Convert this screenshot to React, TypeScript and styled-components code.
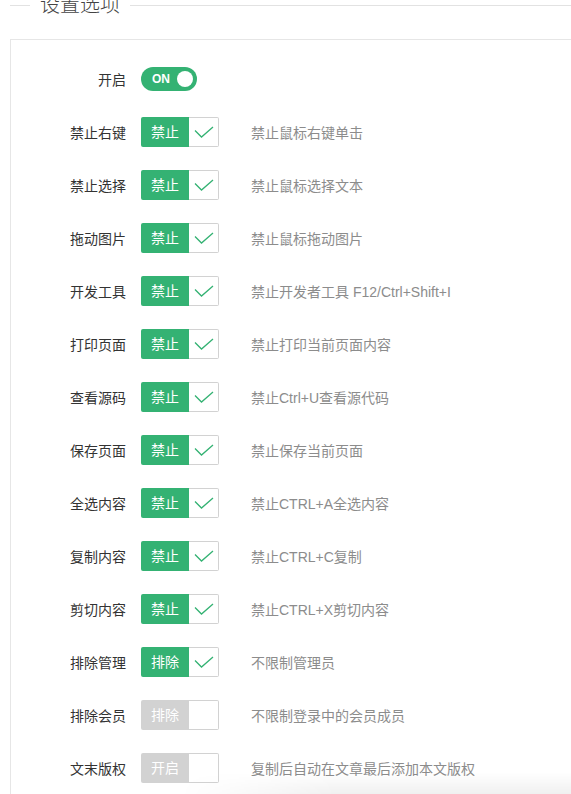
import React from "react";
import styled, { createGlobalStyle } from "styled-components";

const Global = createGlobalStyle`
  html, body { margin: 0; padding: 0; background: #fff; overflow: hidden; }
  body { font-family: "Liberation Sans", "Noto Sans CJK SC", sans-serif; color: #333; }
`;

const Page = styled.div`
  width: 600px;
  padding-left: 10px;
`;

const Legend = styled.div`
  display: flex;
  align-items: center;
  height: 20px;
  margin-top: -5px;
`;

const LegendLine = styled.div<{ $grow?: boolean }>`
  height: 1px;
  background: #e2e2e2;
  width: 20px;
  flex: ${(p) => (p.$grow ? "1" : "none")};
`;

const LegendText = styled.div`
  font-size: 20px;
  line-height: 20px;
  font-weight: 300;
  color: #444;
  padding: 0 10px;
`;

const Panel = styled.div`
  margin-top: 24px;
  border: 1px solid #e6e6e6;
  border-right: none;
  padding-top: 24px;
  padding-bottom: 40px;
  display: flex;
  flex-direction: column;
  gap: 23px;
`;

const Row = styled.div`
  display: flex;
  align-items: center;
  height: 30px;
`;

const Label = styled.div`
  width: 130px;
  box-sizing: border-box;
  padding-right: 15px;
  text-align: right;
  font-size: 14px;
  color: #333;
`;

const Switch = styled.div`
  width: 56px;
  height: 24px;
  border-radius: 12px;
  background: #34b273;
  display: flex;
  align-items: center;
  justify-content: space-between;
  box-sizing: border-box;
  padding: 0 4px 0 11px;
  color: #fff;
  font-size: 12px;
  font-weight: bold;
`;

const Knob = styled.div`
  width: 16px;
  height: 16px;
  border-radius: 50%;
  background: #fff;
`;

const Check = styled.div`
  display: flex;
  height: 30px;
  width: 78px;
`;

const CheckText = styled.div<{ $on: boolean }>`
  width: 48px;
  height: 30px;
  line-height: 30px;
  text-align: center;
  font-size: 14px;
  color: #fff;
  border-radius: 2px 0 0 2px;
  background: ${(p) => (p.$on ? "#34b273" : "#d2d2d2")};
`;

const CheckBox = styled.div`
  width: 30px;
  height: 30px;
  box-sizing: border-box;
  border: 1px solid #d2d2d2;
  border-left: none;
  border-radius: 0 2px 2px 0;
  display: flex;
  align-items: center;
  justify-content: center;
  background: #fff;
`;

const Desc = styled.div`
  margin-left: 32px;
  font-size: 14px;
  color: #8c8c8c;
  white-space: nowrap;
`;

const Shade = styled.div`
  position: fixed;
  left: 180px;
  right: 0;
  bottom: 0;
  height: 22px;
  pointer-events: none;
  background: linear-gradient(to bottom, rgba(0, 0, 0, 0), rgba(0, 0, 0, 0.06));
  -webkit-mask-image: linear-gradient(to right, transparent, #000 40%);
  mask-image: linear-gradient(to right, transparent, #000 40%);
`;

const Tick = () => (
  <svg width="20" height="12" viewBox="0 0 20 12">
    <polyline points="1,4.5 7.5,11 19,1" fill="none" stroke="#34b273" strokeWidth="1.3" />
  </svg>
);

type Item = { label: string; text: string; on: boolean; desc: string };

const items: Item[] = [
  { label: "禁止右键", text: "禁止", on: true, desc: "禁止鼠标右键单击" },
  { label: "禁止选择", text: "禁止", on: true, desc: "禁止鼠标选择文本" },
  { label: "拖动图片", text: "禁止", on: true, desc: "禁止鼠标拖动图片" },
  { label: "开发工具", text: "禁止", on: true, desc: "禁止开发者工具 F12/Ctrl+Shift+I" },
  { label: "打印页面", text: "禁止", on: true, desc: "禁止打印当前页面内容" },
  { label: "查看源码", text: "禁止", on: true, desc: "禁止Ctrl+U查看源代码" },
  { label: "保存页面", text: "禁止", on: true, desc: "禁止保存当前页面" },
  { label: "全选内容", text: "禁止", on: true, desc: "禁止CTRL+A全选内容" },
  { label: "复制内容", text: "禁止", on: true, desc: "禁止CTRL+C复制" },
  { label: "剪切内容", text: "禁止", on: true, desc: "禁止CTRL+X剪切内容" },
  { label: "排除管理", text: "排除", on: true, desc: "不限制管理员" },
  { label: "排除会员", text: "排除", on: false, desc: "不限制登录中的会员成员" },
  { label: "文末版权", text: "开启", on: false, desc: "复制后自动在文章最后添加本文版权" },
];

export default function App() {
  return (
    <>
      <Global />
      <Page>
        <Legend>
          <LegendLine />
          <LegendText>设置选项</LegendText>
          <LegendLine $grow />
        </Legend>
        <Panel>
          <Row>
            <Label>开启</Label>
            <Switch>
              <span>ON</span>
              <Knob />
            </Switch>
          </Row>
          {items.map((it) => (
            <Row key={it.label}>
              <Label>{it.label}</Label>
              <Check>
                <CheckText $on={it.on}>{it.text}</CheckText>
                <CheckBox>{it.on && <Tick />}</CheckBox>
              </Check>
              <Desc>{it.desc}</Desc>
            </Row>
          ))}
        </Panel>
      </Page>
      <Shade />
    </>
  );
}
